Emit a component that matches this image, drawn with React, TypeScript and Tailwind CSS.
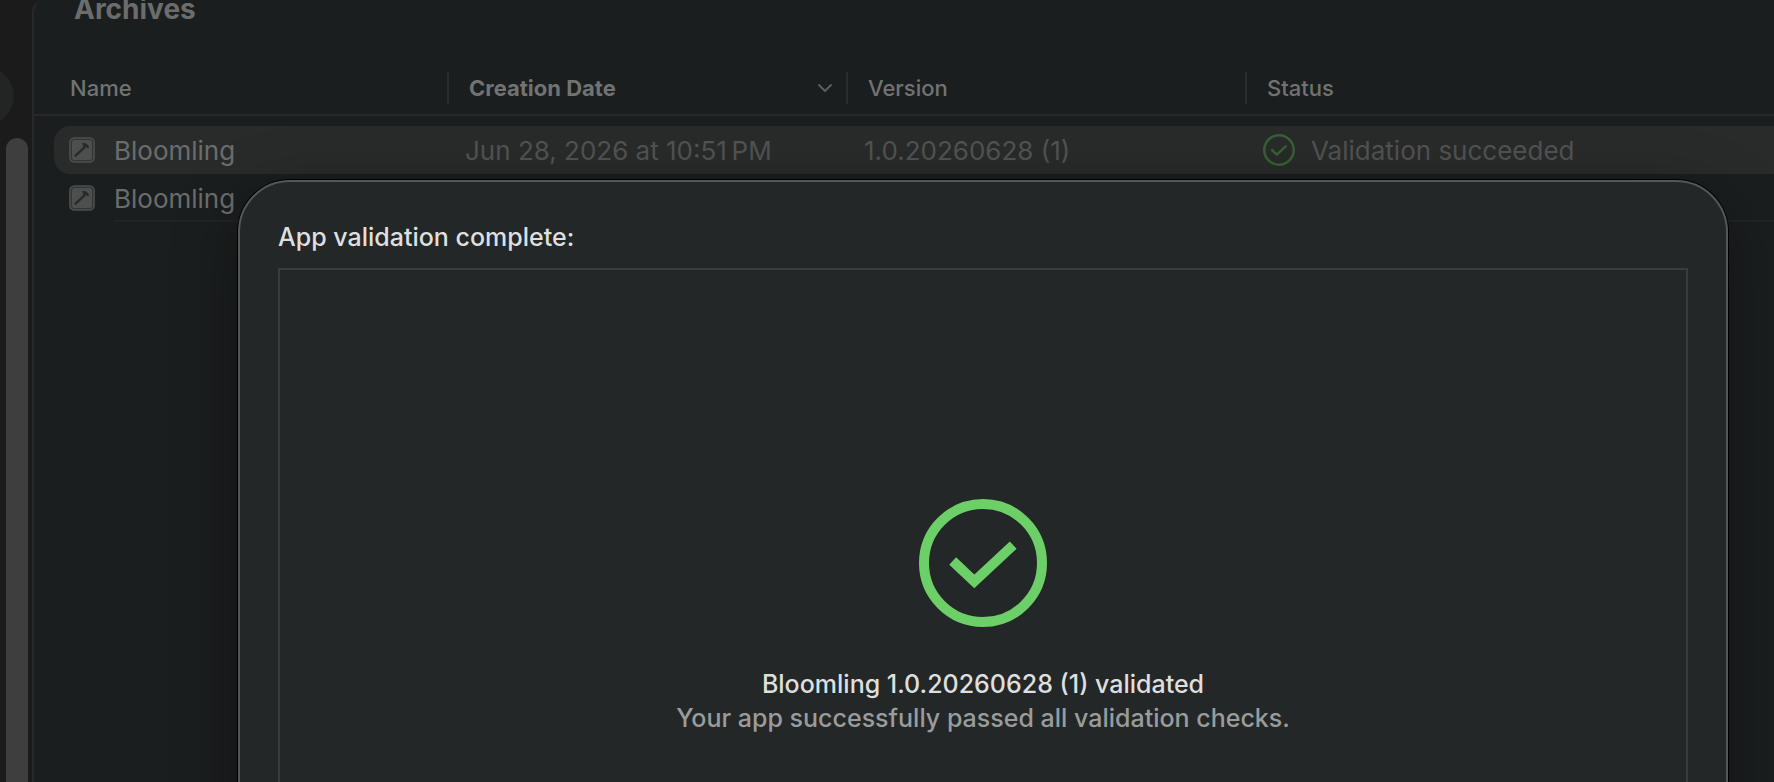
const archives = [
  { name: "Bloomling", date: "Jun 28, 2026 at 10:51\u202fPM", version: "1.0.20260628 (1)", status: "Validation succeeded", selected: true },
  { name: "Bloomling", date: "", version: "", status: "", selected: false },
];

function AppIcon() {
  return (
    <svg viewBox="0 0 26 26" className="h-[26px] w-[26px] shrink-0" aria-hidden="true">
      <rect x="0.9" y="0.9" width="24.2" height="24.2" rx="4.5" fill="#343635" stroke="#4d4f4e" strokeWidth="1.5" />
      <rect x="3" y="3" width="20" height="20" rx="2.5" fill="#4d4f4e" />
      <path d="M6.6 18.6 15.2 10.6" stroke="#282a29" strokeWidth="2.4" strokeLinecap="round" />
      <path d="M12.6 6.8c2-1.3 4-1 5.4.4l2.4 3-1.5 1.4-1.6-1.4-1.7.8-1.7-1.9.2-1.4z" fill="#282a29" />
    </svg>
  );
}

function CheckCircle({ className, stroke }: { className: string; stroke: number }) {
  return (
    <svg viewBox="0 0 128 128" className={className} fill="none" stroke="currentColor" strokeWidth={stroke} aria-hidden="true">
      <circle cx="64" cy="64" r={64 - stroke / 2} />
      <path d="M33.7 62 55.3 82.3 94.2 46.2" />
    </svg>
  );
}

function HeaderCell({ label, bold, chevron }: { label: string; bold?: boolean; chevron?: boolean }) {
  return (
    <th scope="col" className="h-[54px] p-0 pb-[10px] text-left align-bottom font-normal">
      <div className="flex h-8 items-center justify-between border-l-2 border-[#2b2d2d] pr-[13px] pl-5">
        <span className={bold ? "font-bold" : "font-medium"}>{label}</span>
        {chevron && (
          <svg viewBox="0 0 16 10" className="h-[10px] w-4" fill="none" stroke="#5c5e5e" strokeWidth="2" strokeLinecap="round" strokeLinejoin="round" aria-hidden="true">
            <path d="M2 2l6 6 6-6" />
          </svg>
        )}
      </div>
    </th>
  );
}

export default function App() {
  return (
    <div className="relative flex h-screen overflow-hidden bg-[#1a1b1a] font-['Inter','Liberation_Sans',sans-serif]">
      <aside className="relative w-8 shrink-0 pt-[138px] pl-[6px]">
        <div className="absolute top-[67px] -left-11 h-[58px] w-[58px] rounded-full bg-[#222524]" />
        <div className="h-full w-[22px] rounded-t-full bg-[#3e3e3e]" />
      </aside>
      <main className="min-w-0 flex-1 rounded-tl-xl border-l-2 border-[#272929] bg-[#1b1e1e]">
        <h1 className="-mt-[11px] h-[73px] pl-10 text-[28px] leading-10 font-bold text-[#6b6d6d]">Archives</h1>
        <table className="w-full table-fixed border-separate border-spacing-0">
          <colgroup>
            <col className="w-[413px]" />
            <col className="w-[399px]" />
            <col className="w-[399px]" />
            <col />
          </colgroup>
          <thead className="text-[22px] text-[#717373]">
            <tr className="[&>th]:border-b-2 [&>th]:border-[#272929]">
              <th scope="col" className="h-[54px] p-0 pb-[10px] pl-9 text-left align-bottom font-medium">
                <div className="flex h-8 items-center">Name</div>
              </th>
              <HeaderCell label="Creation Date" bold chevron />
              <HeaderCell label="Version" />
              <HeaderCell label="Status" />
            </tr>
          </thead>
          <tbody className="text-[26px] text-[#515353]">
            <tr aria-hidden="true">
              <td className="h-[10px] p-0" />
            </tr>
            {archives.map((a, i) => (
              <tr key={i}>
                <td className="h-12 p-0 pl-5">
                  <div className={a.selected ? "flex h-12 items-center rounded-l-2xl bg-[#292b2a] pl-[15px]" : "flex h-12 items-center pl-[15px]"}>
                    <AppIcon />
                    <span className={a.selected ? "ml-[19px] flex h-full flex-1 items-center text-[#6b6d6d]" : "ml-[19px] flex h-full flex-1 items-center text-[#6b6d6d] shadow-[inset_0_-2px_0_#222424]"}>
                      {a.name}
                    </span>
                  </div>
                </td>
                <td className={a.selected ? "bg-[#292b2a] p-0 pl-[18px]" : "p-0 shadow-[inset_0_-2px_0_#222424]"}>{a.date}</td>
                <td className={a.selected ? "bg-[#292b2a] p-0 pl-[18px]" : "p-0 shadow-[inset_0_-2px_0_#222424]"}>{a.version}</td>
                <td className={a.selected ? "bg-[#292b2a] p-0 pl-[18px]" : "p-0 shadow-[inset_0_-2px_0_#222424]"}>
                  {a.status && (
                    <div className="flex items-center gap-4">
                      <CheckCircle className="h-8 w-8 text-[#376134]" stroke={10} />
                      {a.status}
                    </div>
                  )}
                </td>
              </tr>
            ))}
          </tbody>
        </table>
      </main>

      <section
        role="dialog"
        aria-labelledby="dialog-title"
        className="absolute top-[180px] right-[46px] -bottom-20 left-[238px] flex flex-col rounded-[52px] border-2 border-[#555757] bg-[#242728] px-[38px] pt-[38px] shadow-[0_0_0_1px_#000,0_16px_64px_rgba(0,0,0,0.35)]"
      >
        <h2 id="dialog-title" className="text-[25px] leading-[34px] font-medium text-[#dedfdf]">App validation complete:</h2>
        <div className="mt-[14px] flex flex-1 flex-col items-center border-2 border-[#3a3d3e] pt-[229px] text-center text-[25px] leading-[34px] font-medium">
          <CheckCircle className="h-32 w-32 text-[#6dcf67]" stroke={10} />
          <p className="mt-10 text-[#dedfdf]">Bloomling 1.0.20260628 (1) validated</p>
          <p className="text-[#9a9c9c]">Your app successfully passed all validation checks.</p>
        </div>
      </section>
    </div>
  );
}
